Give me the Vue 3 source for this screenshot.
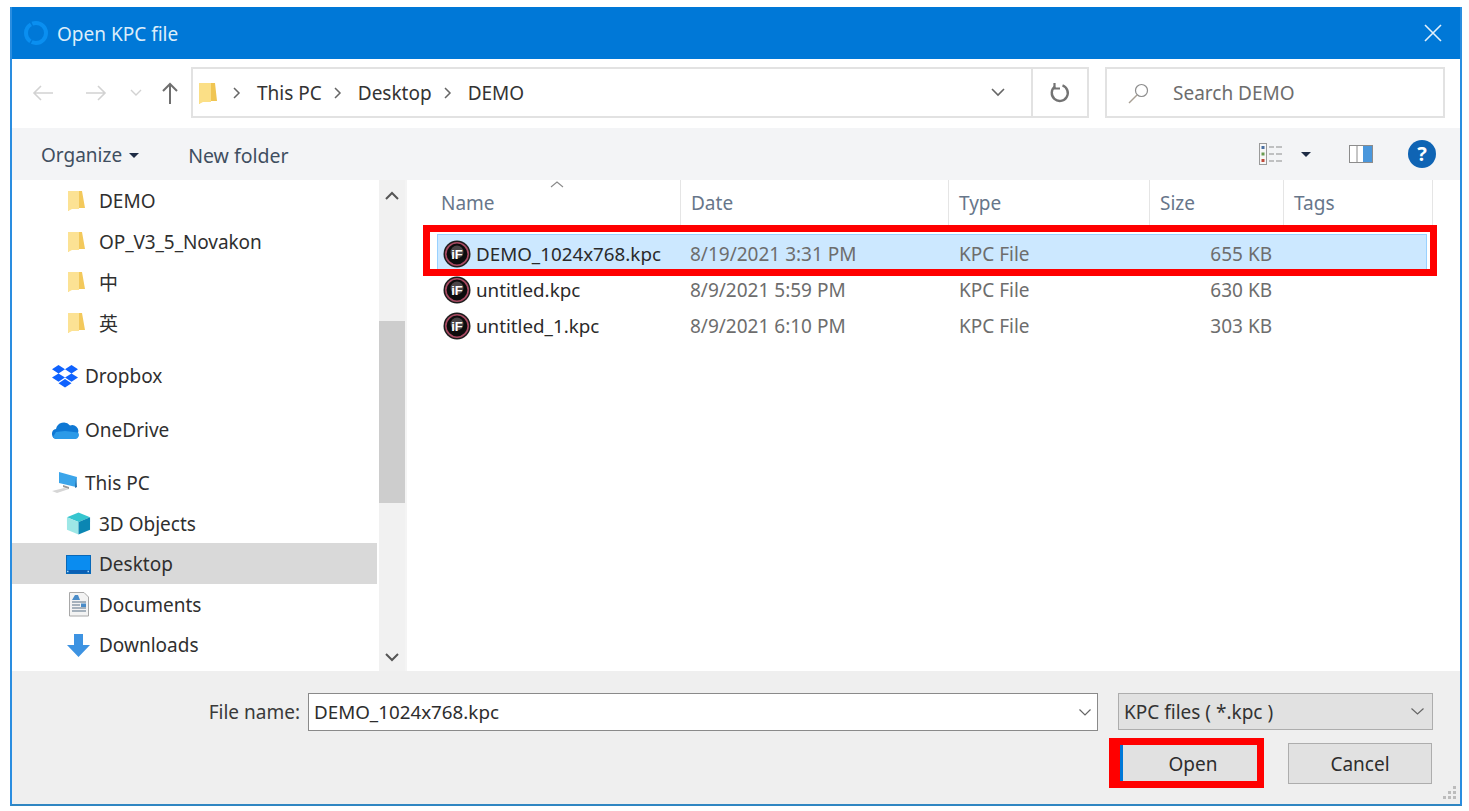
<script setup>
const files = [
  { name: 'DEMO_1024x768.kpc', date: '8/19/2021 3:31 PM', size: '655 KB', sel: true },
  { name: 'untitled.kpc', date: '8/9/2021 5:59 PM', size: '630 KB' },
  { name: 'untitled_1.kpc', date: '8/9/2021 6:10 PM', size: '303 KB' }
]
const columns = ['Name', 'Date', 'Type', 'Size', 'Tags']
const folders = ['DEMO', 'OP_V3_5_Novakon', '中', '英']
</script>

<template>
  <div class="win">
    <header class="title">
      <svg class="t-ico" width="26" height="26" viewBox="0 0 26 26"><circle cx="13" cy="13" r="10" fill="none" stroke="#0a8ff0" stroke-width="4" stroke-dasharray="20 1.5"/></svg>
      <span class="t-txt">Open KPC file</span>
      <svg class="t-x" width="18" height="18" viewBox="0 0 18 18"><path d="M1 1l16 16M17 1L1 17" stroke="#e4f1fb" stroke-width="1.6" fill="none"/></svg>
    </header>

    <div class="addr">
      <div class="nav">
        <svg class="n1" width="22" height="16" viewBox="0 0 22 16"><path d="M21 8H2M9 1L2 8l7 7" fill="none" stroke="#d2d2d2" stroke-width="1.6"/></svg>
        <svg class="n2" width="22" height="16" viewBox="0 0 22 16"><path d="M1 8h19M13 1l7 7-7 7" fill="none" stroke="#d2d2d2" stroke-width="1.6"/></svg>
        <svg class="n3" width="12" height="8" viewBox="0 0 12 8"><path d="M1 1l5 5 5-5" fill="none" stroke="#d2d2d2" stroke-width="1.4"/></svg>
        <svg class="n4" width="16" height="22" viewBox="0 0 16 22"><path d="M8 22V2M1 9l7-7 7 7" fill="none" stroke="#6f6f6f" stroke-width="2"/></svg>
      </div>
      <div class="crumbs">
        <svg class="c-folder" width="18" height="24" viewBox="0 0 18 24"><path d="M0 2h16l2 18H4l-4 3z" fill="#f0c552"/><path d="M0 2h12v19H4l-4 2z" fill="#fbdf86"/></svg>
        <svg class="sep" width="8" height="12" viewBox="0 0 8 12"><path d="M1 1l5 5-5 5" fill="none" stroke="#666" stroke-width="1.5"/></svg>
        <span>This PC</span>
        <svg class="sep" width="8" height="12" viewBox="0 0 8 12"><path d="M1 1l5 5-5 5" fill="none" stroke="#666" stroke-width="1.5"/></svg>
        <span>Desktop</span>
        <svg class="sep" width="8" height="12" viewBox="0 0 8 12"><path d="M1 1l5 5-5 5" fill="none" stroke="#666" stroke-width="1.5"/></svg>
        <span>DEMO</span>
        <svg class="c-drop" width="14" height="9" viewBox="0 0 14 9"><path d="M1 1l6 6 6-6" fill="none" stroke="#666" stroke-width="1.6"/></svg>
      </div>
      <div class="refresh">
        <svg width="22" height="22" viewBox="0 0 22 22"><path d="M13.500 3.400A8 8 0 1 1 6 4.500" fill="none" stroke="#737373" stroke-width="2.400"/><path d="M5.500 1v5.500H11" fill="none" stroke="#737373" stroke-width="2.200"/></svg>
      </div>
      <div class="search">
        <svg width="22" height="22" viewBox="0 0 22 22"><circle cx="13.500" cy="8.500" r="6" fill="none" stroke="#8d8d8d" stroke-width="1.200"/><path d="M9 13l-8 8" stroke="#a89f94" stroke-width="1.500"/></svg>
        <span>Search DEMO</span>
      </div>
    </div>

    <div class="tools">
      <span class="org">Organize</span>
      <i class="caret c-org"></i>
      <span class="newf">New folder</span>
      <span class="grow"></span>
      <svg width="24" height="22" viewBox="0 0 24 22"><rect x=".5" y=".5" width="7" height="21" fill="#f7f7f7" stroke="#9a9a9a"/><rect x="2.500" y="3" width="3" height="3" fill="#4a6fa0"/><rect x="2.500" y="9.500" width="3" height="3" fill="#6a9a50"/><rect x="2.500" y="16" width="3" height="3" fill="#c04a3a"/><path d="M10 4h5M17 4h6M10 11h5M17 11h6M10 18h5M17 18h6" stroke="#8b8b8b" stroke-width="1.200"/></svg>
      <i class="caret c-view"></i>
      <svg class="pane" width="24" height="18" viewBox="0 0 24 18"><rect x=".5" y=".5" width="23" height="17" fill="#fff" stroke="#8c8c8c"/><rect x="14" y="1" width="9" height="16" fill="#4a97dc"/><path d="M8 1v16" stroke="#8c8c8c"/></svg>
      <span class="help">?</span>
    </div>

    <main class="body">
      <nav class="side">
        <div v-for="f in folders" :key="f" class="si lv2">
          <svg class="fold" width="17" height="22" viewBox="0 0 17 22"><path d="M0 1h14l3 17H4l-4 3z" fill="#f3c95c"/><path d="M0 1h11v18H4l-4 2z" fill="#fce294"/></svg>
          <span>{{ f }}</span>
        </div>
        <div class="si lv1 gap">
          <svg width="28" height="24" viewBox="0 0 28 24"><path d="M7.500 1L1 5.200l6.500 4.200L14 5.200zM20.500 1L14 5.200l6.500 4.200L27 5.200zM1 13.600l6.500 4.200L14 13.600 7.500 9.400zM27 13.600l-6.500 4.200L14 13.600l6.500-4.200zM14 15l-6.500 4.200 6.500 4.200 6.500-4.200z" fill="#0f62fe"/></svg>
          <span>Dropbox</span>
        </div>
        <div class="si lv1 gap">
          <svg width="28" height="20" viewBox="0 0 28 20"><path d="M6 19a5 5 0 0 1-1-9.900A8 8 0 0 1 19 5.500 6 6 0 0 1 27 13a5 5 0 0 1-3 6z" fill="#0f78d4"/><path d="M6 19h18a4 4 0 0 0 3-6.500L14 11l-9 1-3 5a5 5 0 0 0 4 2z" fill="#2c9ae8"/></svg>
          <span>OneDrive</span>
        </div>
        <div class="si lv1 gap">
          <svg width="28" height="24" viewBox="0 0 28 24"><path d="M8 1l18 5-1 10-17-4z" fill="#3ba5ea"/><path d="M25 7l1 9-2 1z" fill="#1c6aa8"/><path d="M1 20l12-3 5 1-12 4z" fill="#d6d6d6"/><path d="M12 14l6 2v2l-6-2z" fill="#9a9a9a"/></svg>
          <span>This PC</span>
        </div>
        <div class="si lv2i">
          <svg width="25" height="25" viewBox="0 0 26 25"><path d="M13 1l12 5-12 5L1 6z" fill="#35c5cf"/><path d="M1 6l12 5v13L1 19z" fill="#9de7e6"/><path d="M25 6l-12 5v13l12-5z" fill="#0b86b3"/></svg>
          <span>3D Objects</span>
        </div>
        <div class="si lv2i on">
          <svg width="25" height="19" viewBox="0 0 25 19"><rect x=".5" y=".5" width="24" height="18" fill="#0a8cf0" stroke="#0868b8"/><rect x="1" y="15" width="23" height="3" fill="#0a5fb4"/><path d="M1 16.500h23" stroke="#a8dcff" stroke-width="1.500" stroke-dasharray="1.500 19"/></svg>
          <span>Desktop</span>
        </div>
        <div class="si lv2i">
          <svg class="doc" width="20" height="25" viewBox="0 0 20 25"><path d="M.5.5H15l4.500 4.500v19H.5z" fill="#f3f3f3" stroke="#a8a8a8"/><path d="M3 8l3-5h3l2 5z" fill="#4a8cc8"/><path d="M3 10h14M3 13h8M3 16h14M3 19h14" stroke="#8c9caa" stroke-width="1.300"/><rect x="12" y="11.500" width="5" height="3.500" fill="#4a8cc8"/></svg>
          <span>Documents</span>
        </div>
        <div class="si lv2i">
          <svg class="dl" width="23" height="23" viewBox="0 0 23 23"><path d="M7 0h9v11h7L11.500 23 0 11h7z" fill="#3d93e2"/></svg>
          <span>Downloads</span>
        </div>
      </nav>

      <div class="sbar">
        <svg class="sb-up" width="14" height="9" viewBox="0 0 14 9"><path d="M1 8l6-6 6 6" fill="none" stroke="#555" stroke-width="2"/></svg>
        <div class="thumb"></div>
        <span class="grow"></span>
        <svg class="sb-dn" width="14" height="9" viewBox="0 0 14 9"><path d="M1 1l6 6 6-6" fill="none" stroke="#555" stroke-width="2"/></svg>
      </div>

      <section class="list">
        <div class="head">
          <div v-for="c in columns" :key="c" class="hc">{{ c }}</div>
          <svg class="sort" width="14" height="7" viewBox="0 0 14 7"><path d="M1 6l6-5 6 5" fill="none" stroke="#8a8a8a" stroke-width="1.100"/></svg>
        </div>
        <div class="rows">
          <div v-for="f in files" :key="f.name" class="row" :class="{ sel: f.sel }">
            <div class="cn">
              <svg width="28" height="28" viewBox="0 0 28 28">
                <circle cx="14" cy="14" r="13.500" fill="#1c1c1c"/>
                <circle cx="14" cy="14" r="11.200" fill="#0c0c0c" stroke="#a84a62" stroke-width="1.600"/>
                <circle cx="14" cy="12" r="6.500" fill="#4a4446"/>
                <text x="14" y="18.500" text-anchor="middle" class="iff">iF</text>
              </svg>
              <span>{{ f.name }}</span>
            </div>
            <div class="cg cd">{{ f.date }}</div>
            <div class="cg ct">KPC File</div>
            <div class="cg cs">{{ f.size }}</div>
          </div>
        </div>
      </section>
    </main>

    <footer class="foot">
      <div class="f1">
        <label>File name:</label>
        <div class="input">
          <span>DEMO_1024x768.kpc</span>
          <svg width="12" height="7" viewBox="0 0 12 7"><path d="M.5.500L6 6 11.500.5" fill="none" stroke="#666" stroke-width="1.200"/></svg>
        </div>
        <div class="select">
          <span>KPC files ( *.kpc )</span>
          <svg width="13" height="7" viewBox="0 0 13 7"><path d="M.5.500L6.500 6l6-5.500" fill="none" stroke="#666" stroke-width="1.200"/></svg>
        </div>
      </div>
      <div class="f2">
        <button class="btn open">Open</button>
        <button class="btn cancel">Cancel</button>
      </div>
      <svg class="grip" width="14" height="16" viewBox="0 0 14 16"><path d="M10 1h3v3h-3zM10 6h3v3h-3zM5 6h3v3H5zM10 11h3v3h-3zM5 11h3v3H5zM0 11h3v3H0z" fill="#bcbcbc"/></svg>
    </footer>

    <div class="mark m-row"></div>
    <div class="mark m-btn"></div>
  </div>
</template>

<style scoped>
.win {
  position: relative;
  box-sizing: border-box;
  margin: 7px 0 0 10px;
  width: 1452px;
  height: 799px;
  display: flex;
  flex-direction: column;
  border: 2px solid #2a8de0;
  border-top: 0;
  border-bottom-color: #2f86c2;
  background: #fff;
  font-family: "Noto Sans", "Noto Sans CJK SC", sans-serif;
  font-size: 19px;
  color: #2c2c2c;
  overflow: hidden;
}
.grow { flex: 1; }

.title {
  flex: 0 0 52px;
  margin: 0 -2px;
  background: #0078d7;
  display: flex;
  align-items: center;
  padding: 0 20px 0 13px;
  color: #dcedfa;
}
.t-txt { margin-left: 8px; flex: 1; padding-top: 2px; }

.addr {
  flex: 0 0 69px;
  display: flex;
  align-items: flex-start;
  padding: 8px 15px 0 0;
  box-sizing: border-box;
}
.nav { width: 179px; height: 51px; display: flex; align-items: center; flex: none; }
.n1 { margin-left: 20px; }
.n2 { margin-left: 31px; }
.n3 { margin-left: 23px; }
.n4 { margin-left: 20px; }
.crumbs {
  flex: none;
  box-sizing: border-box;
  width: 842px;
  height: 51px;
  border: 2px solid #e2e2e2;
  display: flex;
  align-items: center;
  padding: 0 26px 0 6px;
  color: #333;
}
.c-folder { margin-right: 16px; }
.sep { margin-right: 16px; }
.crumbs span { margin-right: 12px; }
.c-drop { margin-left: auto; }
.refresh {
  flex: none;
  box-sizing: border-box;
  width: 57px;
  height: 51px;
  margin-left: -1px;
  border: 2px solid #e2e2e2;
  border-left-width: 1px;
  display: flex;
  align-items: center;
  justify-content: center;
}
.search {
  flex: none;
  box-sizing: border-box;
  width: 340px;
  height: 51px;
  margin-left: 16px;
  border: 2px solid #e2e2e2;
  display: flex;
  align-items: center;
  padding-left: 21px;
  color: #6d6d6d;
}
.search span { margin-left: 23px; }

.tools {
  flex: 0 0 52px;
  background: #f3f4f6;
  display: flex;
  align-items: center;
  padding: 0 24px 0 29px;
  color: #3f4e60;
}
.org { padding-top: 2px; }
.caret {
  display: block;
  width: 0;
  height: 0;
  border-left: 5.500px solid transparent;
  border-right: 5.500px solid transparent;
  border-top: 5.500px solid #1e2b45;
}
.c-org { margin: 2px 0 0 7px; }
.newf { margin-left: 49px; padding-top: 2px; font-size: 19.500px; }
.c-view { margin: 0 0 0 18px; }
.pane { margin-left: 38px; }
.help {
  width: 28px;
  height: 28px;
  margin-left: 35px;
  border-radius: 50%;
  background: #0f64b4;
  color: #fff;
  font-weight: 700;
  font-size: 20px;
  line-height: 28px;
  text-align: center;
}

.body { flex: 0 0 491px; display: flex; min-height: 0; overflow: hidden; }
.side { flex: 0 0 367px; overflow: hidden; }
.si { box-sizing: border-box; height: 40.500px; padding-top: 2px; display: flex; align-items: center; color: #2f2f2f; }
.lv2 { padding-left: 56px; }
.lv2 span { margin-left: 14px; }
.lv2:nth-child(n+2) span { letter-spacing: -0.1px; }
.lv1 { padding-left: 39px; }
.lv1 span { margin-left: 6px; }
.lv2i { padding-left: 54px; }
.lv2i span { margin-left: 8px; }
.gap { margin-top: 13px; }
.on { background: #d9d9d9; margin-right: 2px; }
.doc { margin: 0 2px 0 3px; }
.dl { margin: 0 1px 0 1px; }

.sbar {
  flex: 0 0 26px;
  background: #f1f1f1;
  display: flex;
  flex-direction: column;
  align-items: center;
}
.sb-up { margin-top: 11px; }
.thumb { width: 100%; height: 182px; margin-top: 121px; background: #cdcdcd; }
.sb-dn { margin-bottom: 9px; }

.list { flex: 1; min-width: 0; border-left: 2px solid #f4f4f4; }
.head {
  position: relative;
  height: 45px;
  display: grid;
  grid-template-columns: 250px 268px 201px 134px 149px;
  margin-left: 24px;
  color: #67768a;
}
.hc {
  box-sizing: border-box;
  padding: 5px 0 0 10px;
  line-height: 36px;
  border-right: 1px solid #e5e5e5;
}
.sort { position: absolute; left: 119px; top: 1px; }
.rows { padding: 9px 0 0 30px; }
.row {
  box-sizing: border-box;
  width: 990px;
  height: 36px;
  display: grid;
  grid-template-columns: 243px 268px 201px 122px;
  align-items: center;
  border: 1px solid transparent;
}
.row.sel { height: 38px; padding-top: 2px; background: #cce8ff; border-color: #99d1ff; }
.cn { display: flex; align-items: center; padding-left: 5px; color: #2a2a2a; font-size: 18.800px; }
.cn span { margin-left: 5px; }
.iff { font-size: 13px; font-weight: 700; fill: #fff; font-family: "Liberation Sans", sans-serif; }
.cg { color: #6d6d6d; }
.cd { padding-left: 9px; }
.ct { padding-left: 10px; }
.cs { text-align: right; }

.foot { position: relative; flex: 1; background: #efefef; padding-top: 22px; box-sizing: border-box; }
.f1 { display: flex; align-items: flex-start; }
.f1 label { width: 296px; box-sizing: border-box; padding-right: 8px; text-align: right; line-height: 38px; color: #3a3a3a; }
.input {
  box-sizing: border-box;
  width: 790px;
  height: 38px;
  background: #fff;
  border: 1px solid #8a8a8a;
  display: flex;
  align-items: center;
  justify-content: space-between;
  padding: 0 6px 0 5px;
  color: #2d2d2d;
  font-size: 18.800px;
}
.select {
  box-sizing: border-box;
  width: 315px;
  height: 37px;
  margin-left: 20px;
  background: #e1e1e1;
  border: 1px solid #adadad;
  display: flex;
  align-items: center;
  justify-content: space-between;
  padding: 0 8px 0 5px;
  color: #333;
}
.f2 { display: flex; justify-content: flex-end; padding: 12px 28px 0 0; }
.btn {
  box-sizing: border-box;
  height: 41px;
  padding: 0;
  font: inherit;
  color: #2d2d2d;
  background: #e1e1e1;
  border: 1px solid #adadad;
}
.open { width: 144px; border-left: 3px solid #0078d7; border-right: 1px solid #3a4a5a; }
.cancel { width: 144px; margin-left: 24px; }
.grip { position: absolute; right: 3px; bottom: 3px; }

.mark { position: absolute; box-sizing: border-box; border: 7px solid #ff0000; pointer-events: none; }
.m-row { left: 411px; top: 218px; width: 1014px; height: 51px; }
.m-btn { left: 1097px; top: 731px; width: 155px; height: 50px; border-left-width: 11px; }
</style>

<style>
html, body { background: #fff; }
</style>
